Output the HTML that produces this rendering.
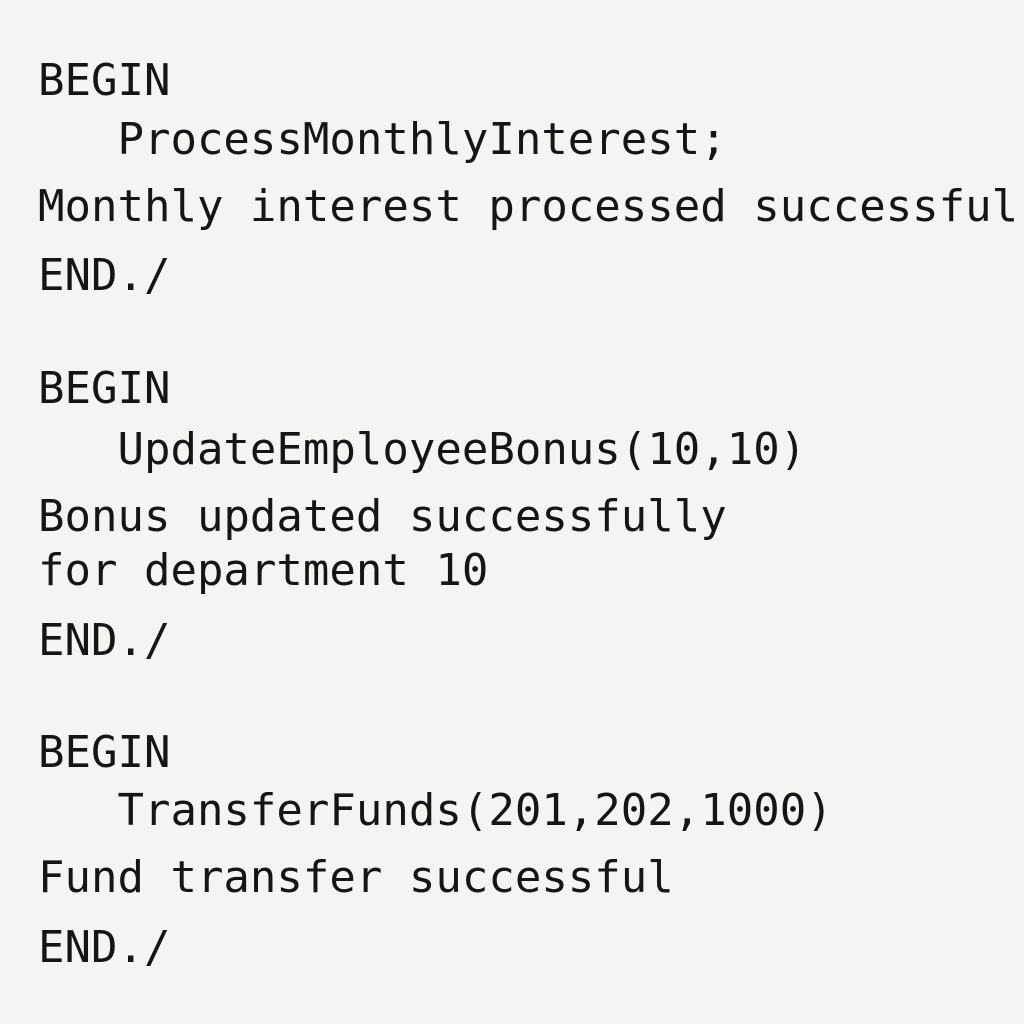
<!DOCTYPE html>
<html><head><meta charset="utf-8"><style>
html,body{margin:0;padding:0;width:1024px;height:1024px;overflow:hidden;background:#f4f4f3;}
div{position:absolute;left:38px;font-family:"DejaVu Sans Mono","Liberation Mono",monospace;font-size:44px;line-height:44px;color:#151515;white-space:pre;}
</style></head><body>
<div style="top:59px">BEGIN</div>
<div style="top:118px">   ProcessMonthlyInterest;</div>
<div style="top:185px">Monthly interest processed successful-</div>
<div style="top:254px">END./</div>
<div style="top:367px">BEGIN</div>
<div style="top:428px">   UpdateEmployeeBonus(10,10)</div>
<div style="top:495px">Bonus updated successfully</div>
<div style="top:549px">for department 10</div>
<div style="top:619px">END./</div>
<div style="top:731px">BEGIN</div>
<div style="top:789px">   TransferFunds(201,202,1000)</div>
<div style="top:856px">Fund transfer successful</div>
<div style="top:926px">END./</div>
</body></html>
